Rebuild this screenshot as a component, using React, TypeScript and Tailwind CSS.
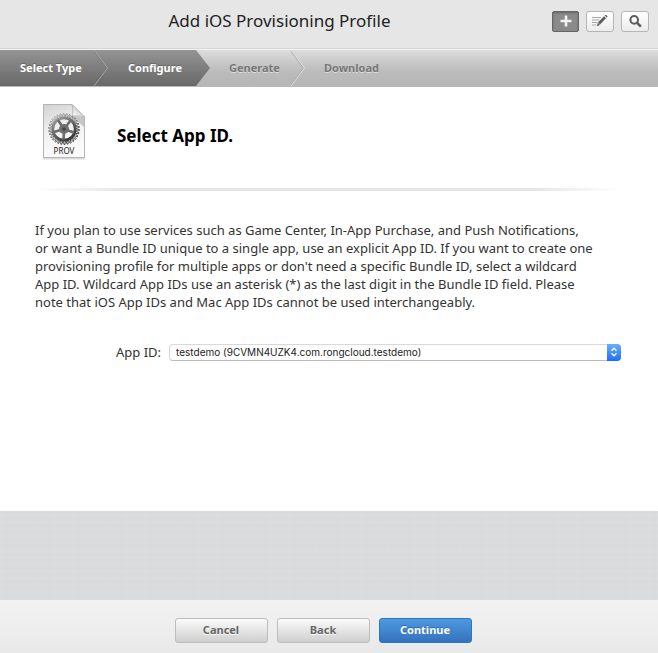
import React from "react";

const FONT = "font-['Noto_Sans','Open_Sans',sans-serif]";

const DARK_BAR = "bg-linear-to-b from-[#949494] to-[#686868]";

function DarkChevron() {
  return (
    <span className={`block h-full w-[14px] shrink-0 ${DARK_BAR}`}>
      <svg viewBox="0 0 14 36" className="block h-full w-full" fill="none" aria-hidden="true">
        <path d="M0 0 L13.5 18 L0 36" stroke="#a9a9a9" strokeWidth="1" />
        <path d="M-1 0 L12.5 18 L-1 36" stroke="#6a6a6a" strokeOpacity="0.4" strokeWidth="1" />
      </svg>
    </span>
  );
}

function DarkTip() {
  return (
    <svg viewBox="0 0 14 36" className="block h-full w-[14px] shrink-0" aria-hidden="true">
      <defs>
        <linearGradient id="tip" x1="0" y1="0" x2="0" y2="1">
          <stop offset="0" stopColor="#949494" />
          <stop offset="1" stopColor="#686868" />
        </linearGradient>
      </defs>
      <path d="M0 0 L14 18 L0 36 Z" fill="url(#tip)" />
    </svg>
  );
}

function LightChevron() {
  return (
    <svg viewBox="0 0 14 36" className="block h-full w-[14px] shrink-0" fill="none" aria-hidden="true">
      <path d="M-1 0 L12.5 18 L-1 36" stroke="#a6a6a6" strokeWidth="1" />
      <path d="M0 0 L13.5 18 L0 36" stroke="#dedede" strokeWidth="1" />
    </svg>
  );
}

function gearPath(cx: number, cy: number, outer: number, inner: number, teeth: number) {
  const points: string[] = [];
  for (let i = 0; i < teeth; i++) {
    const base = (i / teeth) * Math.PI * 2;
    const step = (Math.PI * 2) / teeth;
    const corners: [number, number][] = [
      [0, inner],
      [0.2, outer],
      [0.5, outer],
      [0.7, inner],
    ];
    for (const [offset, r] of corners) {
      const a = base + offset * step;
      points.push(`${(cx + Math.cos(a) * r).toFixed(2)} ${(cy + Math.sin(a) * r).toFixed(2)}`);
    }
  }
  return `M${points.join("L")}Z`;
}

function ProvisioningIcon() {
  return (
    <svg viewBox="0 0 46 58" className="block h-[58px] w-[46px] shrink-0" role="img" aria-label="PROV">
      <defs>
        <linearGradient id="page" x1="0" y1="0" x2="0.3" y2="1">
          <stop offset="0" stopColor="#d2d2d2" />
          <stop offset="0.5" stopColor="#f0f0f0" />
          <stop offset="1" stopColor="#fbfbfb" />
        </linearGradient>
        <linearGradient id="fold" x1="0" y1="1" x2="0.6" y2="0.3">
          <stop offset="0" stopColor="#ffffff" />
          <stop offset="1" stopColor="#cfcfcf" />
        </linearGradient>
        <linearGradient id="gear" gradientUnits="userSpaceOnUse" x1="14" y1="12" x2="32" y2="40">
          <stop offset="0" stopColor="#a8a8a8" />
          <stop offset="0.5" stopColor="#636363" />
          <stop offset="1" stopColor="#262626" />
        </linearGradient>
      </defs>
      <path d="M2 2H32L44 14V55.500H2Z" fill="#888" fillOpacity="0.3" transform="translate(0 1)" />
      <path d="M2.500 1.500H31L43.500 14V54.500H2.500Z" fill="url(#page)" stroke="#b5b5b5" />
      <path d="M30 13L43 24V14Z" fill="#777" fillOpacity="0.35" />
      <path d="M31 1.500C32 6 32 10 31 13.500C35 12.500 39 12.500 43.500 14Z" fill="url(#fold)" stroke="#a9a9a9" strokeWidth="0.7" />
      <path d={gearPath(23, 26, 15.5, 12.5, 30)} fill="none" stroke="url(#gear)" strokeWidth="0.9" />
      <circle cx="23" cy="26" r="11.2" fill="none" stroke="url(#gear)" strokeWidth="2.800" />
      <g stroke="#6c6c6c" strokeWidth="2.600">
        {[20, 92, 164, 236, 308].map((deg) => (
          <path key={deg} d="M23 26H33.500" transform={`rotate(${deg} 23 26)`} />
        ))}
      </g>
      <circle cx="23" cy="26" r="5" fill="#707070" />
      <circle cx="23" cy="26" r="1.800" fill="#444" />
      <text x="23" y="51" textAnchor="middle" fontSize="8" fill="#222" className={FONT}>
        PROV
      </text>
    </svg>
  );
}

const toolButton =
  "flex h-[21px] w-[28px] items-center justify-center rounded-[3px] border border-[#b5b5b5] bg-linear-to-b from-white to-[#ececec]";

const greyButton =
  "h-[25px] w-[93px] rounded-[3px] border border-[#bdbdbd] bg-linear-to-b from-[#fbfbfb] to-[#cfcfcf] text-[11px] font-bold text-[#666] [text-shadow:0_1px_0_#fff]";

export default function App() {
  return (
    <div className={`flex min-h-screen flex-col bg-white text-[#333] ${FONT}`}>
      <header className="relative flex h-[50px] items-center justify-end border-b border-[#f4f4f4] bg-[#e6e6e6] pr-[9px] shadow-[inset_0_-1px_0_#d6d6d6]">
        <h1 className="absolute inset-x-0 top-[9px] pr-[99px] text-center text-[17px] leading-6 text-[#222]">
          Add iOS Provisioning Profile
        </h1>
        <div className="relative flex gap-[7px] pb-[7px]">
          <button
            type="button"
            aria-label="Add"
            className="flex h-[21px] w-[27px] items-center justify-center rounded-[2px] border border-[#666] bg-[#8a8a8a] shadow-[inset_0_1px_2px_#666]"
          >
            <svg viewBox="0 0 12 12" className="size-3" aria-hidden="true">
              <path d="M6 0.500V11.500M0.500 6H11.500" stroke="#f2f2f2" strokeWidth="2.600" />
            </svg>
          </button>
          <button type="button" aria-label="Edit" className={toolButton}>
            <svg viewBox="0 0 18 12" className="h-3 w-[18px]" fill="none" aria-hidden="true">
              <path d="M1 2.500H10M1 5H8.500M1 7.500H6.500M1 10H5" stroke="#aaa" />
              <path d="M8 8.500L14 2.200" stroke="#5c5c5c" strokeWidth="2.800" />
              <path d="M14.600 1.600L15.700 0.500" stroke="#5c5c5c" strokeWidth="2.800" />
              <path d="M6.800 7.800L9 10L5.800 11.200Z" fill="#5c5c5c" />
            </svg>
          </button>
          <button type="button" aria-label="Search" className={toolButton}>
            <svg viewBox="0 0 12 12" className="size-[13px]" fill="none" stroke="#5c5c5c" aria-hidden="true">
              <circle cx="4.800" cy="4.500" r="3.500" strokeWidth="1.900" />
              <path d="M7.500 7.200L11 10.800" strokeWidth="2.400" />
            </svg>
          </button>
        </div>
      </header>

      <nav aria-label="Progress">
        <ol className="flex h-[37px] items-stretch border-b border-[#b9b9b9] bg-linear-to-b from-[#dcdcdc] via-[#bbbbbb] via-60% to-[#b6b6b6] text-[11px] font-bold leading-9 whitespace-nowrap text-[#777] [text-shadow:0_1px_0_#ddd]">
          <li className="flex text-white [text-shadow:0_-1px_0_#666]">
            <span className={`w-[94px] pl-[20px] ${DARK_BAR}`}>Select Type</span>
            <DarkChevron />
          </li>
          <li aria-current="step" className="flex text-white [text-shadow:0_-1px_0_#666]">
            <span className={`w-[88px] pl-[20px] ${DARK_BAR}`}>Configure</span>
            <DarkTip />
          </li>
          <li className="flex">
            <span className="w-[81px] pl-[19px]">Generate</span>
            <LightChevron />
          </li>
          <li className="pl-[19px]">Download</li>
        </ol>
      </nav>

      <main className="flex-1 px-[35px]">
        <div className="flex items-center gap-[30px] pt-4 pl-[6px]">
          <ProvisioningIcon />
          <h2 className="pt-2 text-[17px] leading-6 font-bold text-black">Select App ID.</h2>
        </div>
        <div className="mt-[27px] h-[3px] bg-[linear-gradient(to_right,transparent,#e6e6e6_15%,#e6e6e6_85%,transparent)]" />
        <p className="mt-[30px] text-[13px] leading-[18px] whitespace-nowrap">
          If you plan to use services such as Game Center, In-App Purchase, and Push Notifications,
          <br />
          or want a Bundle ID unique to a single app, use an explicit App ID. If you want to create one
          <br />
          provisioning profile for multiple apps or don't need a specific Bundle ID, select a wildcard
          <br />
          App ID. Wildcard App IDs use an asterisk (*) as the last digit in the Bundle ID field. Please
          <br />
          note that iOS App IDs and Mac App IDs cannot be used interchangeably.
        </p>
        <div className="mt-8 flex items-center gap-2 pr-[2px] pl-[81px]">
          <label htmlFor="app-id" className="text-[13px] leading-[18px] whitespace-nowrap">
            App ID:
          </label>
          <div className="relative flex-1">
            <select
              id="app-id"
              className="block h-[17px] w-full appearance-none rounded-[4px] border border-[#d9d9d9] border-b-[#b9b9b9] bg-white pl-[6px] font-['Inter',sans-serif] text-[10px] leading-[15px] text-[#222]"
            >
              <option>testdemo (9CVMN4UZK4.com.rongcloud.testdemo)</option>
            </select>
            <span className="pointer-events-none absolute inset-y-0 right-0 flex w-[14px] items-center justify-center rounded-r-[4px] bg-linear-to-b from-[#69adfb] to-[#1a6dfa]">
              <svg viewBox="0 0 8 10" className="h-[10px] w-2" fill="none" stroke="#fff" strokeWidth="1.300" aria-hidden="true">
                <path d="M1.500 3.700L4 1.200L6.500 3.700M1.500 6.300L4 8.800L6.500 6.300" />
              </svg>
            </span>
          </div>
        </div>
      </main>

      <div className="h-[89px] bg-[#d9dadc] bg-[repeating-linear-gradient(0deg,#ffffff0d_0px,#ffffff0d_1px,transparent_2px,transparent_7px),repeating-linear-gradient(90deg,#ffffff0a_0px,#ffffff0a_1px,transparent_2px,transparent_9px)]" />

      <footer className="flex h-[53px] items-center justify-center gap-[9px] bg-linear-to-b from-[#f2f2f2] to-[#e9e9e9] pt-[7px] pr-3">
        <button type="button" className={greyButton}>
          Cancel
        </button>
        <button type="button" className={greyButton}>
          Back
        </button>
        <button
          type="button"
          className="h-[25px] w-[93px] rounded-[3px] border border-[#2a78be] bg-linear-to-b from-[#4c9ae2] to-[#3672bd] text-[11px] font-bold text-white [text-shadow:0_-1px_0_#2a66a8]"
        >
          Continue
        </button>
      </footer>
    </div>
  );
}
